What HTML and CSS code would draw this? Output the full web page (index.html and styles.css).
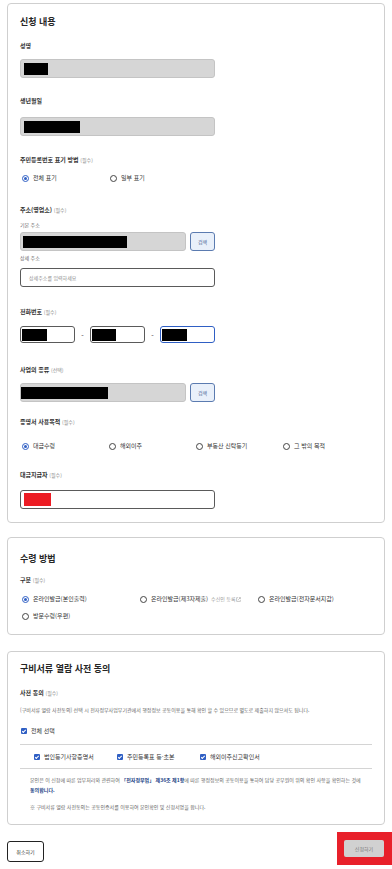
FILE: index.html
```html
<!DOCTYPE html>
<html lang="ko">
<head>
<meta charset="utf-8">
<title>신청 내용</title>
<link rel="stylesheet" href="styles.css">
</head>
<body>
<div class="page">
  <section class="card card-apply">
    <h2 class="card-title">신청 내용</h2>

    <div class="label m12">성명</div>
    <div class="input gray m8"><span class="redact" style="width:24px"></span></div>

    <div class="label m18">생년월일</div>
    <div class="input gray m11"><span class="redact" style="width:56px"></span></div>

    <div class="label m19">주민등록번호 표기 방법 <span class="req">(필수)</span></div>
    <div class="radios cols88 m8">
      <label class="radio on"><i></i>전체 표기</label>
      <label class="radio"><i></i>일부 표기</label>
    </div>

    <div class="label m22">주소(영업소) <span class="req">(필수)</span></div>
    <div class="sublabel m6">기본 주소</div>
    <div class="input-row m3">
      <div class="input gray short"><span class="redact" style="width:104px"></span></div>
      <button class="btn-search">검색</button>
    </div>
    <div class="sublabel m3">상세 주소</div>
    <div class="input white m6"><span class="placeholder">상세주소를 입력하세요</span></div>

    <div class="label m20">전화번호 <span class="req">(필수)</span></div>
    <div class="phone-row m9">
      <div class="input white tel"><span class="redact" style="width:25px"></span></div>
      <span class="dash">-</span>
      <div class="input white tel"><span class="redact" style="width:24px"></span></div>
      <span class="dash">-</span>
      <div class="input white tel focus"><span class="redact" style="width:25px"></span></div>
    </div>

    <div class="label m22">사업의 종류 <span class="req">(선택)</span></div>
    <div class="input-row m8">
      <div class="input gray short"><span class="redact first" style="width:87px"></span></div>
      <button class="btn-search">검색</button>
    </div>

    <div class="label m15">증명서 사용목적 <span class="req">(필수)</span></div>
    <div class="radios cols87 m14">
      <label class="radio on"><i></i>대금수령</label>
      <label class="radio"><i></i>해외이주</label>
      <label class="radio"><i></i>부동산 신탁등기</label>
      <label class="radio"><i></i>그 밖의 목적</label>
    </div>

    <div class="label m19">대금지급자 <span class="req">(필수)</span></div>
    <div class="input white m10"><span class="redact red" style="width:27px"></span></div>
  </section>

  <section class="card card-receive">
    <h2 class="card-title">수령 방법</h2>
    <div class="label m9">구분 <span class="req">(필수)</span></div>
    <div class="radios cols118 m9">
      <label class="radio on"><i></i>온라인발급(본인출력)</label>
      <label class="radio"><i></i>온라인발급(제3자제출) <span class="hint">수신인 등록 <svg class="ext" viewBox="0 0 8 8" width="5" height="5"><path d="M3 1H1v6h6V5M4.5 1H7v2.5M7 1L3.5 4.5" fill="none" stroke="#999" stroke-width="0.9"/></svg></span></label>
      <label class="radio"><i></i>온라인발급(전자문서지갑)</label>
    </div>
    <div class="radios m7">
      <label class="radio"><i></i>방문수령(우편)</label>
    </div>
  </section>

  <section class="card card-consent">
    <h2 class="card-title">구비서류 열람 사전 동의</h2>
    <div class="label m12">사전 동의 <span class="req">(필수)</span></div>
    <p class="desc m8">[구비서류 열람 사전동의] 선택 시 전자정부사업무기관에서 행정정보 공동이용을 통해 확인 할 수 있으므로 별도로 제출하지 않으셔도 됩니다.</p>
    <label class="check m12"><i></i>전체 선택</label>
    <div class="check-box">
      <label class="check"><i></i>법인등기사항증명서</label>
      <label class="check"><i></i>주민등록표 등·초본</label>
      <label class="check"><i></i>해외이주신고확인서</label>
    </div>
    <p class="agree">본인은 이 신청에 따른 업무처리와 관련하여 <b>「전자정부법」 제36조 제1항</b>에 따른 행정정보의 공동이용을 통하여 담당 공무원이 위의 확인 사항을 확인하는 것에 <b>동의합니다.</b></p>
    <p class="note">※ 구비서류 열람 사전동의는 공동인증서를 이용하여 본인확인 및 신청서명을 합니다.</p>
  </section>

  <div class="actions">
    <button class="btn-cancel">취소하기</button>
    <span class="highlight"><button class="btn-submit">신청하기</button></span>
  </div>
</div>
</body>
</html>
```

FILE: styles.css
```css
* { box-sizing: border-box; }
html, body { margin: 0; padding: 0; background: #fff; }
body {
  font-family: "Noto Sans CJK KR", "Noto Sans", sans-serif;
  color: #222;
  width: 392px;
  height: 869px;
  overflow: hidden;
}
.page { padding: 3px 7px 0 7px; }

.card {
  border: 1px solid #cfcfcf;
  border-radius: 4px;
  padding: 11px 12px 13px 12px;
  display: flex;
  flex-direction: column;
  align-items: flex-start;
}
.card-receive { margin-top: 14px; padding-top: 14px; }
.card-consent { margin-top: 16px; padding-top: 10px; }

.card-title {
  margin: 0;
  font-size: 9px;
  line-height: 14px;
  font-weight: 700;
  color: #262626;
}
.label {
  font-size: 6px;
  line-height: 10px;
  font-weight: 700;
  color: #333;
}
.req { font-weight: 400; color: #8a8a8a; font-size: 5px; }
.sublabel { font-size: 5px; line-height: 8px; color: #666; }

.m3 { margin-top: 3px; } .m6 { margin-top: 6px; } .m7 { margin-top: 7px; }
.m8 { margin-top: 8px; } .m9 { margin-top: 9px; } .m10 { margin-top: 10px; }
.m11 { margin-top: 11px; } .m12 { margin-top: 12px; } .m14 { margin-top: 14px; }
.m15 { margin-top: 15px; } .m18 { margin-top: 18px; } .m19 { margin-top: 19px; }
.m20 { margin-top: 20px; } .m22 { margin-top: 22px; }

.input {
  width: 195px;
  height: 19px;
  border-radius: 3px;
  display: flex;
  align-items: center;
  padding-left: 3px;
}
.input.gray { background: #d6d6d6; border: 1px solid #c4c4c4; }
.input.white { background: #fff; border: 1px solid #5a5a5a; }
.input.short { width: 166px; height: 19px; padding-left: 2px; }
.input.tel { width: 55px; height: 17px; padding-left: 1px; }
.input.focus { border-color: #2f5fc4; }
.redact { display: block; height: 12px; background: #000; }
.redact.first { margin-left: -2px; }
.redact.red { background: #ec1c24; height: 13px; }
.placeholder { font-size: 5px; color: #8d8d8d; padding-left: 5px; }

.input-row { display: flex; gap: 4px; align-items: center; }
.btn-search {
  width: 25px;
  height: 19px;
  border: 1px solid #5b7bb0;
  border-radius: 3px;
  background: #e9f0fa;
  font-family: inherit;
  font-size: 5px;
  color: #4a6694;
  padding: 0;
}

.phone-row { display: flex; align-items: center; }
.dash { width: 15px; text-align: center; font-size: 7px; color: #333; }

.radios { display: flex; align-items: center; }
.radio {
  display: flex;
  align-items: center;
  font-size: 6px;
  line-height: 10px;
  color: #333;
  white-space: nowrap;
}
.cols88 .radio { width: 88px; }
.cols87 .radio { width: 87px; }
.cols118 .radio { width: 118px; }
.radio i {
  width: 7px; height: 7px;
  border: 1px solid #444;
  border-radius: 50%;
  margin: 0 4px 0 2px;
  flex: none;
  position: relative;
}
.radio.on i { border-color: #2f5fc4; }
.radio.on i::after {
  content: "";
  position: absolute;
  left: 1px; top: 1px;
  width: 3px; height: 3px;
  border-radius: 50%;
  background: #2f5fc4;
}
.hint { color: #9a9a9a; font-size: 5px; margin-left: 3px; display: inline-flex; align-items: center; gap: 1px; }

.desc {
  margin-bottom: 0;
  font-size: 5px;
  line-height: 8px;
  color: #666;
}
.check {
  display: flex;
  align-items: center;
  font-size: 6px;
  line-height: 10px;
  color: #333;
  white-space: nowrap;
}
.check i {
  width: 6px; height: 6px;
  background: #2f5fc4;
  border-radius: 1px;
  margin: 0 4px 0 1px;
  flex: none;
  position: relative;
}
.check i::after {
  content: "";
  position: absolute;
  left: 2px; top: 0.6px;
  width: 1.3px; height: 2.8px;
  border: solid #fff;
  border-width: 0 0.8px 0.8px 0;
  transform: rotate(45deg);
}
.check-box {
  align-self: stretch;
  margin-top: 8px;
  border-top: 1px solid #d4d4d4;
  border-bottom: 1px solid #d4d4d4;
  padding: 7px 0 6px 13px;
  display: flex;
}
.check-box .check { width: 83px; }
.agree {
  margin: 6px 0 0 0;
  padding: 0 8px 0 10px;
  font-size: 5px;
  line-height: 10px;
  color: #666;
}
.agree b { color: #223f86; font-weight: 700; }
.note {
  margin: 8px 0 0 0;
  padding-left: 10px;
  font-size: 5px;
  line-height: 8px;
  color: #666;
}

.actions {
  margin-top: 13px;
  display: flex;
  justify-content: space-between;
  align-items: center;
}
.btn-cancel {
  width: 37px;
  height: 21px;
  border: 1px solid #222;
  border-radius: 3px;
  background: #fff;
  font-family: inherit;
  font-size: 5px;
  color: #333;
  padding: 0;
}
.highlight {
  display: flex;
  background: #e8202a;
  padding: 8px 8px 8px 7px;
  margin-right: -7px;
  margin-top: -6px;
}
.btn-submit {
  width: 40px;
  height: 17px;
  border: none;
  border-radius: 2px;
  background: #d1d1d1;
  font-family: inherit;
  font-size: 5px;
  color: #777;
  padding: 0;
}
```
